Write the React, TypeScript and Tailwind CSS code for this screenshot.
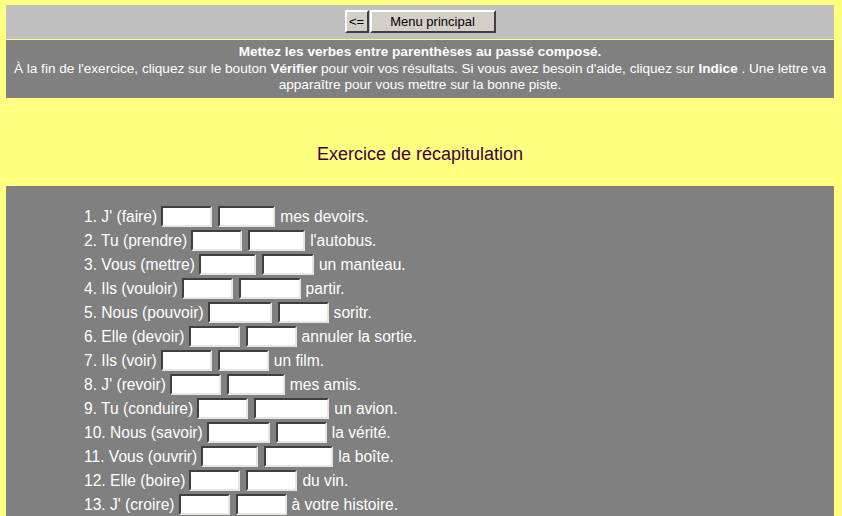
import React from "react";

const rows: [string, number, number, string][] = [
  ["1. J' (faire)", 51, 57, "mes devoirs."],
  ["2. Tu (prendre)", 51, 57, "l'autobus."],
  ["3. Vous (mettre)", 57, 52, "un manteau."],
  ["4. Ils (vouloir)", 51, 62, "partir."],
  ["5. Nous (pouvoir)", 64, 51, "soritr."],
  ["6. Elle (devoir)", 51, 51, "annuler la sortie."],
  ["7. Ils (voir)", 51, 51, "un film."],
  ["8. J' (revoir)", 51, 58, "mes amis."],
  ["9. Tu (conduire)", 51, 75, "un avion."],
  ["10. Nous (savoir)", 63, 51, "la vérité."],
  ["11. Vous (ouvrir)", 57, 69, "la boîte."],
  ["12. Elle (boire)", 51, 51, "du vin."],
  ["13. J' (croire)", 51, 51, "à votre histoire."],
];

function Field({ w }: { w: number }) {
  return (
    <input
      type="text"
      className="h-[21px] bg-white border-2 border-t-[#404040] border-l-[#404040] border-b-[#e8e6e0] border-r-[#e8e6e0] outline-none shrink-0 block"
      style={{ width: w }}
    />
  );
}

export default function App() {
  return (
    <div
      className="min-h-[516px] bg-[#ffff80] pt-[5px] pl-[6px] pr-[8px] overflow-hidden"
      style={{ fontFamily: '"Liberation Sans", Arial, sans-serif' }}
    >
      <div className="h-[34px] bg-[#c0c0c0] flex justify-center items-start pt-[5px]">
        <button className="h-[23px] w-[24px] bg-[#d4d0c8] border-2 border-t-white border-l-white border-b-[#404040] border-r-[#404040] text-[13px] leading-none text-black flex items-center justify-center">
          &lt;=
        </button>
        <button className="h-[23px] w-[126px] ml-[1px] bg-[#d4d0c8] border-2 border-t-white border-l-white border-b-[#404040] border-r-[#404040] text-[13px] leading-none text-black flex items-center justify-center">
          Menu principal
        </button>
      </div>
      <div className="mt-[1px] h-[58px] bg-[#808080] text-white text-[13.6px] leading-[16.5px] text-center pt-[4px]">
        <div className="font-bold">Mettez les verbes entre parenthèses au passé composé.</div>
        <div>
          À la fin de l'exercice, cliquez sur le bouton <b>Vérifier</b> pour voir vos résultats. Si vous avez besoin d'aide, cliquez sur <b>Indice</b> . Une lettre va
          <br />
          apparaître pour vous mettre sur la bonne piste.
        </div>
      </div>
      <div className="h-[88px] pt-[46px] text-center text-[18px] leading-[21px] text-[#400040]">
        Exercice de récapitulation
      </div>
      <div className="bg-[#808080] pt-[18px] pl-[78px] pb-[20px] text-white text-[15.6px] leading-[21px]">
        {rows.map(([label, w1, w2, tail], i) => (
          <div key={i} className="flex items-center h-[24px]">
            <span>{label}</span>
            <span className="ml-[4px]"><Field w={w1} /></span>
            <span className="ml-[6px]"><Field w={w2} /></span>
            <span className="ml-[5px]">{tail}</span>
          </div>
        ))}
      </div>
    </div>
  );
}
